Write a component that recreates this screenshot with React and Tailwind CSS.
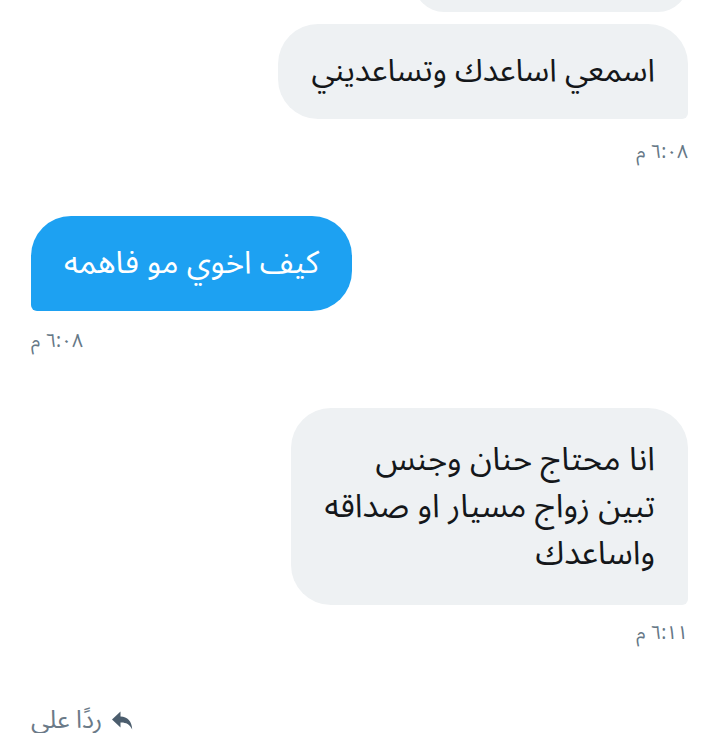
import React from 'react'

const Time = ({ children, align }) => (
    <div dir="rtl" className={`text-[19px] leading-[24px] text-[#657786] ${align}`}>
        {children}
    </div>
)

const ReplyIcon = () => (
    <svg viewBox="0 0 24 24" className="w-[24px] h-[24px]" fill="#4b5d6d">
        <path d="M10.5 3.5 L2 11.5 L10.5 19.5 L10.5 14.4 C15.8 14.2 19.6 16 22.2 21.5 C21.8 13.4 17.6 9 10.5 8.6 Z" />
    </svg>
)

export default function App() {
    return (
        <div className="h-[733px] overflow-hidden bg-white px-[31px] font-['Noto_Sans_Arabic','DejaVu_Sans',sans-serif]">
            <div className="flex flex-col">

                {/* previous message, cut off at the top */}
                <div className="self-end -mt-[48px] h-[60px] w-[274px] rounded-[40px] bg-[#eef1f3]"></div>

                <div dir="rtl" className="self-end mt-[12px] rounded-[40px] rounded-br-[6px] bg-[#eef1f3] px-[33px] py-[24px] text-[31.5px] leading-[47px] text-[#14171a]">
                    اسمعي اساعدك وتساعديني
                </div>
                <Time align="self-end mt-[21px]">٦:٠٨ م</Time>

                <div dir="rtl" className="self-start mt-[52px] rounded-[40px] rounded-bl-[6px] bg-[#1da1f2] px-[33px] py-[24px] text-[31.5px] leading-[47px] text-white">
                    كيف اخوي مو فاهمه
                </div>
                <Time align="self-start mt-[18px]">٦:٠٨ م</Time>

                <div dir="rtl" className="self-end mt-[55px] rounded-[40px] rounded-br-[6px] bg-[#eef1f3] px-[33px] py-[28px] text-[32.5px] leading-[47px] text-[#14171a] whitespace-pre-line">
                    {"انا محتاج حنان وجنس\nتبين زواج مسيار او صداقه\nواساعدك"}
                </div>
                <Time align="self-end mt-[16px]">٦:١١ م</Time>

                <div dir="rtl" className="self-start mt-[60px] flex items-center gap-[8px] text-[25px] leading-[30px] text-[#6b7a88]">
                    <ReplyIcon />
                    <span>ردًا على</span>
                </div>
            </div>
        </div>
    )
}
